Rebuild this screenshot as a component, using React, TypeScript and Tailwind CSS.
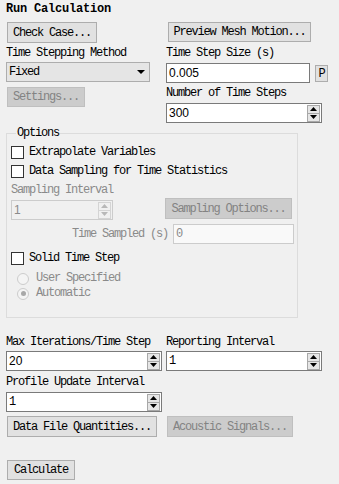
import React from "react";

const mono = "font-[family-name:'Liberation_Mono',monospace] text-[12px] tracking-[-1.2px]";
const sans = "font-[family-name:'Liberation_Sans',sans-serif] text-[12px] tracking-normal";

function Btn({ className = "", disabled = false, children }: { className?: string; disabled?: boolean; children: React.ReactNode }) {
  return (
    <div
      className={`flex items-center justify-center border whitespace-nowrap ${
        disabled ? "bg-[#cccccc] border-[#bfbfbf] text-[#838383]" : "bg-[#e1e1e1] border-[#adadad] text-black"
      } ${className}`}
    >
      {children}
    </div>
  );
}

function Spinner({ disabled = false }: { disabled?: boolean }) {
  const c = disabled ? "#b8b8b8" : "#000";
  return (
    <div
      className={`w-[13px] h-[17px] mr-[1px] flex flex-col border shrink-0 ${
        disabled ? "border-[#d4d4d4] bg-[#f0f0f0]" : "border-[#a8a8a8] bg-[#e6e6e6]"
      }`}
    >
      <div className={`flex-1 flex items-center justify-center border-b ${disabled ? "border-[#d4d4d4]" : "border-[#a8a8a8]"}`}>
        <svg width="7" height="4" viewBox="0 0 7 4">
          <path d="M3.5 0 L7 4 L0 4 Z" fill={c} />
        </svg>
      </div>
      <div className="flex-1 flex items-center justify-center">
        <svg width="7" height="4" viewBox="0 0 7 4">
          <path d="M0 0 L7 0 L3.5 4 Z" fill={c} />
        </svg>
      </div>
    </div>
  );
}

function SpinInput({ value, valueClass, className = "", disabled = false }: { value: string; valueClass: string; className?: string; disabled?: boolean }) {
  return (
    <div
      className={`flex items-center h-[20px] border ${
        disabled ? "border-[#cccccc] bg-[#f0f0f0] text-[#8a8a8a]" : "border-[#7a7a7a] bg-white text-black"
      } ${className}`}
    >
      <div className={`flex-1 pl-[2px] leading-[18px] ${valueClass}`}>{value}</div>
      <Spinner disabled={disabled} />
    </div>
  );
}

function Check({ label }: { label: string }) {
  return (
    <div className="flex items-center h-[19px]">
      <div className="w-[13px] h-[13px] border border-[#333333] bg-white shrink-0" />
      <div className="ml-[5px] leading-[19px] whitespace-nowrap">{label}</div>
    </div>
  );
}

function Radio({ label, selected }: { label: string; selected?: boolean }) {
  return (
    <div className="flex items-center h-[15px] pl-[6px]">
      <div className="w-[12px] h-[12px] rounded-full border border-[#cccccc] bg-[#f4f4f4] flex items-center justify-center shrink-0">
        {selected && <div className="w-[5px] h-[5px] rounded-full bg-[#a8a8a8]" />}
      </div>
      <div className="ml-[7px] leading-[15px] text-[#8a8a8a] whitespace-nowrap">{label}</div>
    </div>
  );
}

export default function App() {
  return (
    <div className={`w-[339px] h-[484px] bg-[#f0f0f0] overflow-hidden pl-[6px] pt-[3px] text-black ${mono}`}>
      <div className="h-[13px] leading-[13px] font-bold tracking-[-0.2px]">Run Calculation</div>

      <div className="flex mt-[6px]">
        {/* left column */}
        <div className="w-[160px] flex flex-col">
          <Btn className="ml-[1px] w-[90px] h-[21px]">Check Case...</Btn>
          <div className="mt-[1px] h-[18px] leading-[18px] whitespace-nowrap">Time Stepping Method</div>
          <div className="w-[144px] h-[20px] border border-[#adadad] bg-[#e5e5e5] flex items-center justify-between pl-[2px] pr-[4px]">
            <span className="leading-[18px]">Fixed</span>
            <svg width="8" height="4" viewBox="0 0 8 4">
              <path d="M0 0 L8 0 L4 4 Z" fill="#000" />
            </svg>
          </div>
          <Btn disabled className="ml-[1px] mt-[5px] w-[78px] h-[20px]">Settings...</Btn>
        </div>
        {/* right column */}
        <div className="flex flex-col">
          <Btn className="ml-[2px] w-[143px] h-[20px]">Preview Mesh Motion...</Btn>
          <div className="mt-[2px] h-[18px] leading-[18px] whitespace-nowrap">Time Step Size (s)</div>
          <div className="flex items-start mt-[1px]">
            <div className={`w-[144px] h-[20px] border border-[#7a7a7a] bg-white pl-[2px] leading-[18px] ${sans}`}>0.005</div>
            <Btn className="ml-[5px] mt-[2px] w-[13px] h-[17px]">P</Btn>
          </div>
          <div className="mt-[1px] h-[18px] leading-[18px] whitespace-nowrap">Number of Time Steps</div>
          <SpinInput className="mt-[1px] w-[156px]" value="300" valueClass={sans} />
        </div>
      </div>

      {/* Options group */}
      <div className="relative mt-[10px] w-[292px] h-[185px] border border-[#dcdcdc] pl-[4px] pt-[9px]">
        <div className="absolute left-[9px] top-[-8px] px-[1px] bg-[#f0f0f0] leading-[14px]">Options</div>
        <Check label="Extrapolate Variables" />
        <Check label="Data Sampling for Time Statistics" />
        <div className="h-[18px] leading-[18px] text-[#8a8a8a] whitespace-nowrap">Sampling Interval</div>
        <div className="flex items-start mt-[-1px]">
          <SpinInput disabled className="mt-[2px] w-[102px]" value="1" valueClass={sans} />
          <Btn disabled className="ml-[52px] w-[127px] h-[21px]">Sampling Options...</Btn>
        </div>
        <div className="flex items-center mt-[4px] h-[20px]">
          <div className="ml-[61px] leading-[20px] text-[#8a8a8a] whitespace-nowrap">Time Sampled (s)</div>
          <div className="ml-[5px] w-[121px] h-[20px] border border-[#cccccc] bg-[#f9f9f9] pl-[2px] leading-[18px] text-[#8a8a8a]">0</div>
        </div>
        <div className="mt-[5px]">
          <Check label="Solid Time Step" />
        </div>
        <div className="mt-[3px]">
          <Radio label="User Specified" />
          <Radio label="Automatic" selected />
        </div>
      </div>

      {/* bottom */}
      <div className="flex mt-[15px]">
        <div className="w-[160px] flex flex-col">
          <div className="h-[18px] leading-[18px] whitespace-nowrap">Max Iterations/Time Step</div>
          <SpinInput className="w-[156px]" value="20" valueClass={sans} />
        </div>
        <div className="flex flex-col">
          <div className="h-[18px] leading-[18px] whitespace-nowrap">Reporting Interval</div>
          <SpinInput className="w-[156px]" value="1" valueClass="" />
        </div>
      </div>
      <div className="mt-[2px] h-[18px] leading-[18px] whitespace-nowrap">Profile Update Interval</div>
      <SpinInput className="mt-[1px] w-[156px]" value="1" valueClass="" />
      <div className="flex mt-[4px]">
        <Btn className="ml-[1px] w-[150px] h-[21px]">Data File Quantities...</Btn>
        <Btn disabled className="ml-[10px] w-[126px] h-[21px]">Acoustic Signals...</Btn>
      </div>
      <Btn className="ml-[1px] mt-[23px] w-[68px] h-[20px]">Calculate</Btn>
    </div>
  );
}
